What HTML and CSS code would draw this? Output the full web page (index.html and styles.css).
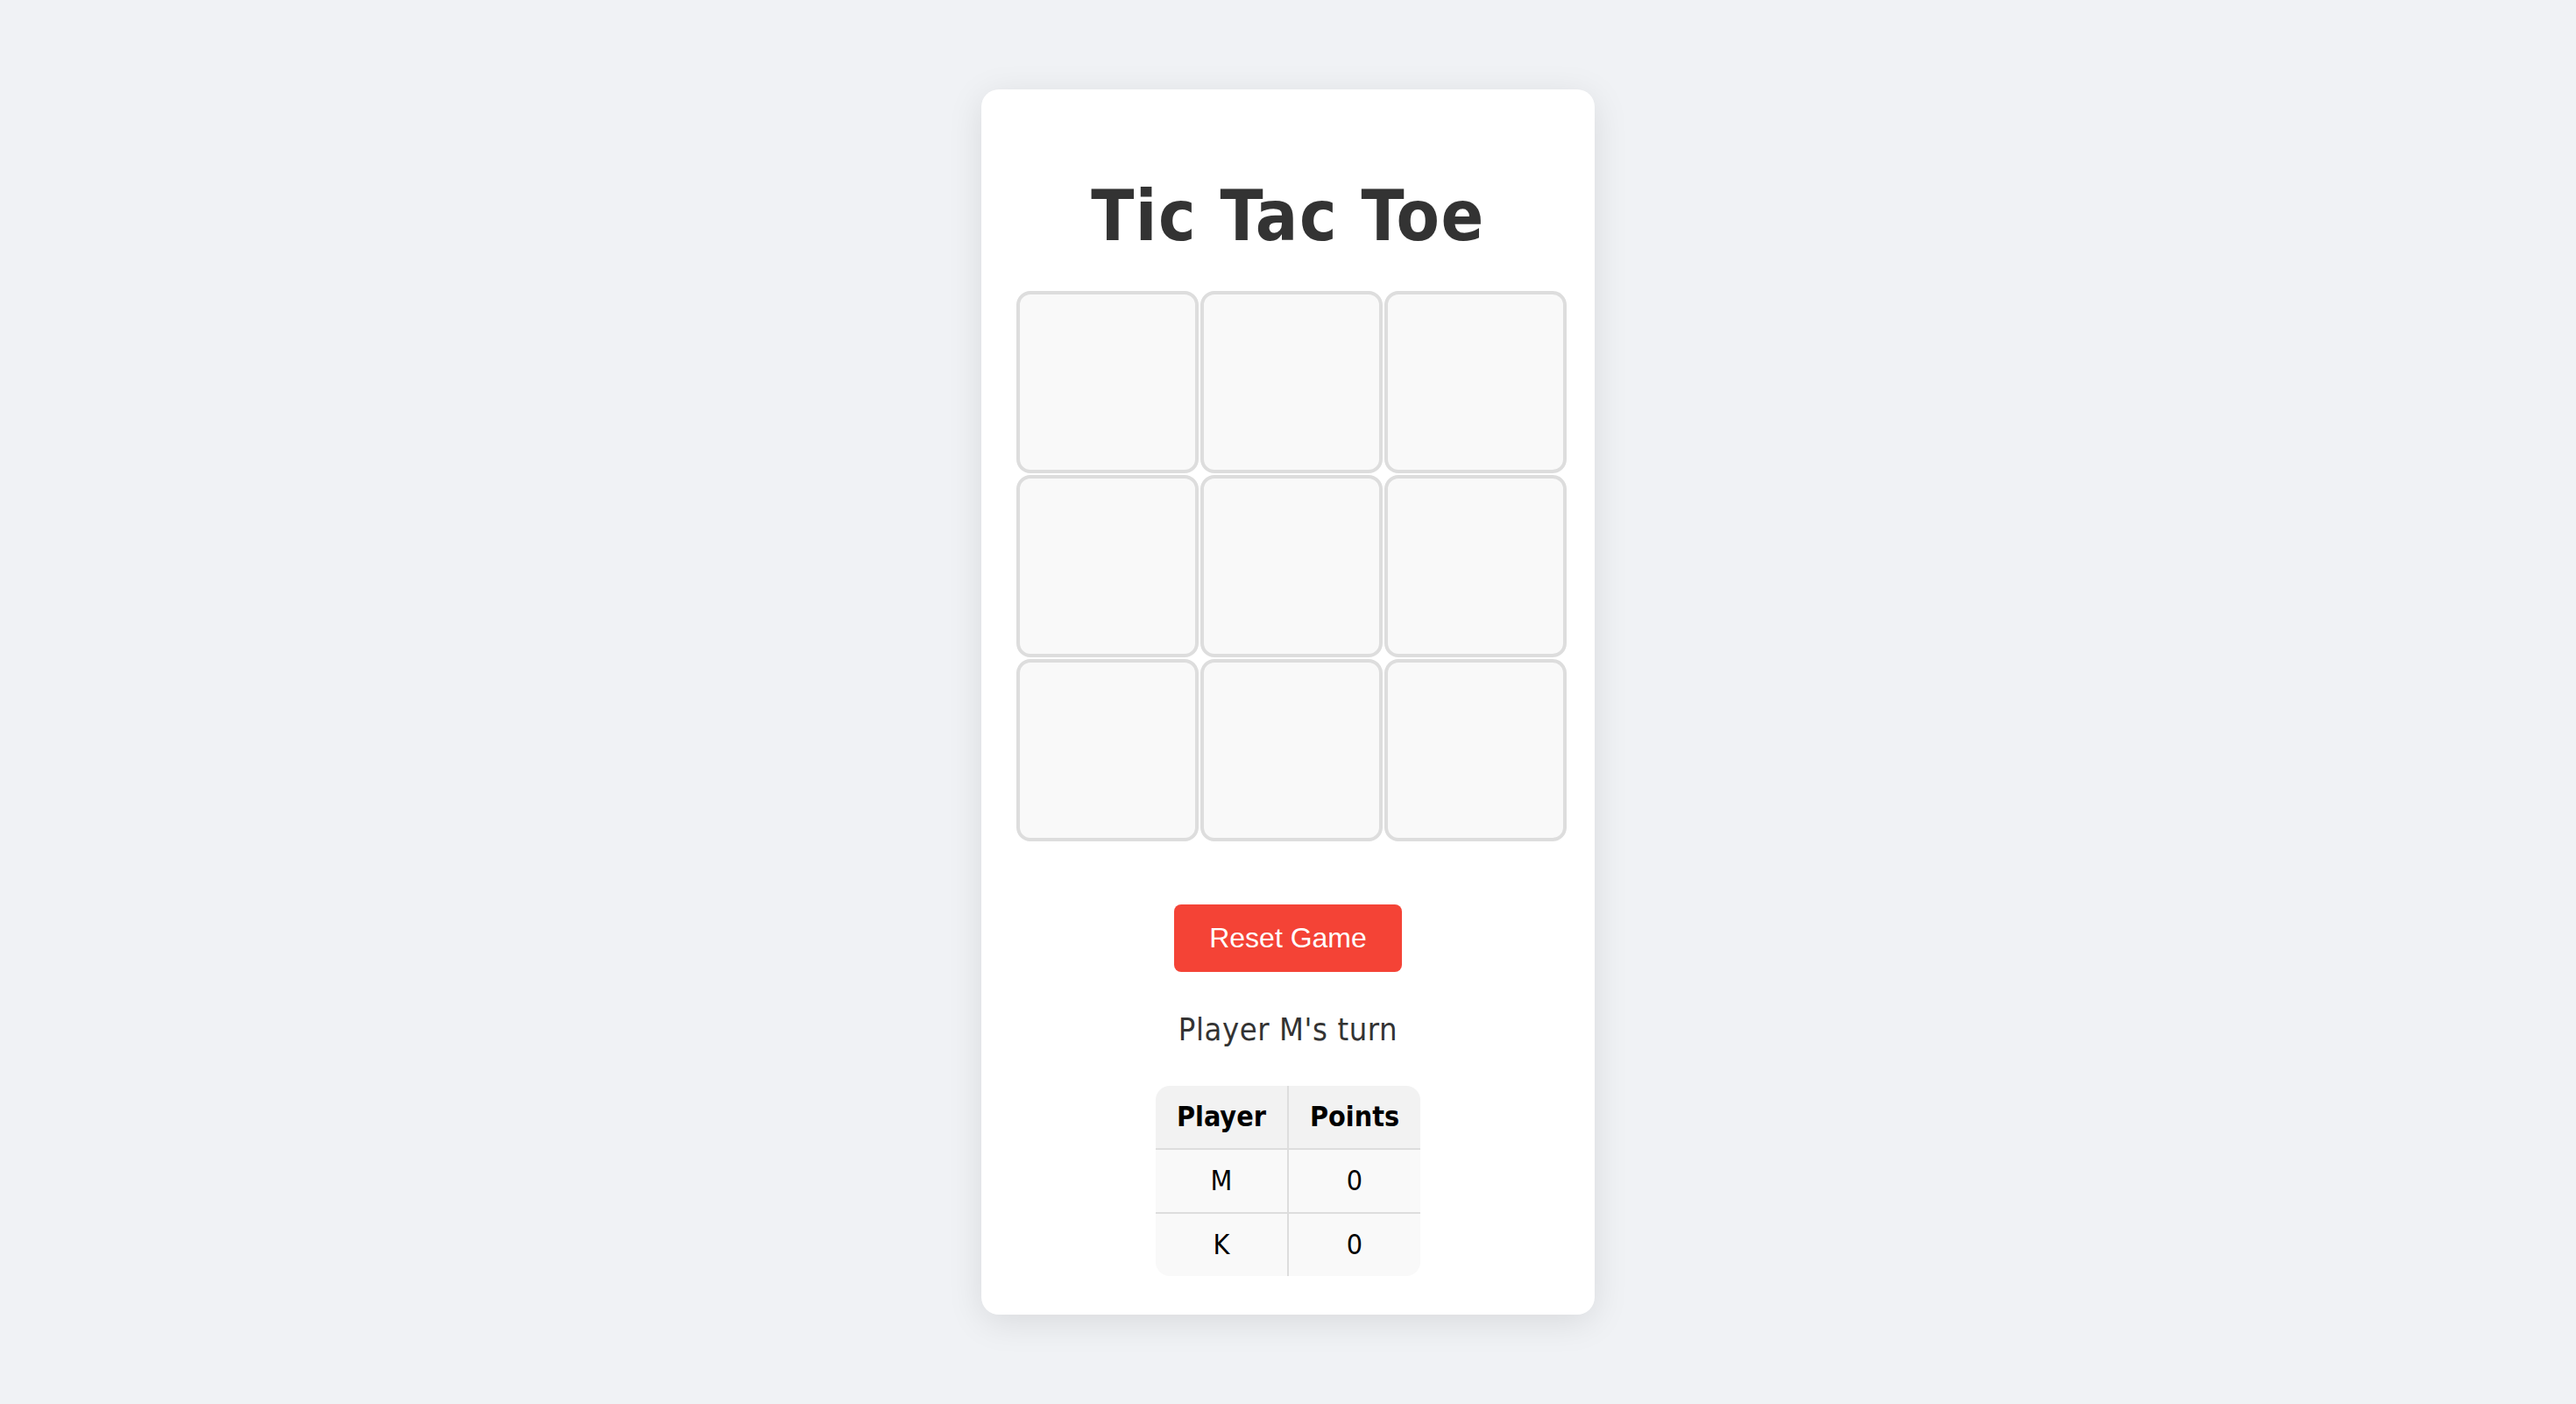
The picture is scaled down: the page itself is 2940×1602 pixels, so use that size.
FILE: index.html
```html
<!DOCTYPE html>
<html lang="en">
<head>
  <meta charset="UTF-8">
  <meta name="viewport" content="width=device-width, initial-scale=1.0">
  <title>Tic Tac Toe</title>
  <link rel="stylesheet" href="styles.css">
</head>
<body>
  <div class="game">
    <h1>Tic Tac Toe</h1>

    <div class="board" id="board">
      <div class="cell" data-i="0"></div>
      <div class="cell" data-i="1"></div>
      <div class="cell" data-i="2"></div>
      <div class="cell" data-i="3"></div>
      <div class="cell" data-i="4"></div>
      <div class="cell" data-i="5"></div>
      <div class="cell" data-i="6"></div>
      <div class="cell" data-i="7"></div>
      <div class="cell" data-i="8"></div>
    </div>

    <button class="reset-btn" id="reset">Reset Game</button>

    <p class="status" id="status">Player M's turn</p>

    <table class="score">
      <thead>
        <tr><th>Player</th><th>Points</th></tr>
      </thead>
      <tbody>
        <tr><td>M</td><td id="scoreM">0</td></tr>
        <tr><td>K</td><td id="scoreK">0</td></tr>
      </tbody>
    </table>
  </div>
</body>
</html>
```

FILE: styles.css
```css
* { box-sizing: border-box; }

body {
  margin: 0;
  min-height: 100vh;
  display: flex;
  justify-content: center;
  align-items: center;
  background: #f0f2f5;
  font-family: "DejaVu Sans Condensed", "DejaVu Sans", sans-serif;
  font-stretch: condensed;
}

.game {
  width: 700px;
  padding: 40px 40px 44px;
  background: #fff;
  border-radius: 20px;
  box-shadow: 0 8px 40px rgba(0, 0, 0, 0.1);
  display: flex;
  flex-direction: column;
  align-items: center;
}

h1 {
  margin: 57px 0 37px;
  font-size: 80px;
  line-height: 96px;
  letter-spacing: 1.5px;
  font-weight: bold;
  color: #333;
}

.board {
  align-self: flex-start;
  display: grid;
  grid-template-columns: repeat(3, 208px);
  grid-auto-rows: 208px;
  gap: 2px;
}

.cell {
  background: #f9f9f9;
  border: 4px solid #ddd;
  border-radius: 16px;
  cursor: pointer;
}

.reset-btn {
  margin-top: 72px;
  padding: 20px 40px;
  border: none;
  border-radius: 8px;
  background: #f44336;
  color: #fff;
  font-family: "Liberation Sans", Arial, sans-serif;
  font-size: 32px;
  cursor: pointer;
}

.status {
  margin: 44px 0 42px;
  font-size: 36px;
  line-height: 44px;
  letter-spacing: 0.6px;
  color: #333;
}

.score {
  border-collapse: separate;
  border-spacing: 0;
  border-radius: 16px;
  overflow: hidden;
  font-size: 32px;
  color: #000;
}

.score th, .score td {
  width: 150px;
  padding: 16px 24px;
  line-height: 39px;
  text-align: center;
  border-bottom: 2px solid #ddd;
}
.score th:first-child, .score td:first-child { width: 152px; border-right: 2px solid #ddd; }
.score tbody tr:last-child td { border-bottom: none; }

.score th { background: #f2f2f2; font-weight: bold; }
.score td { background: #f9f9f9; }
```
